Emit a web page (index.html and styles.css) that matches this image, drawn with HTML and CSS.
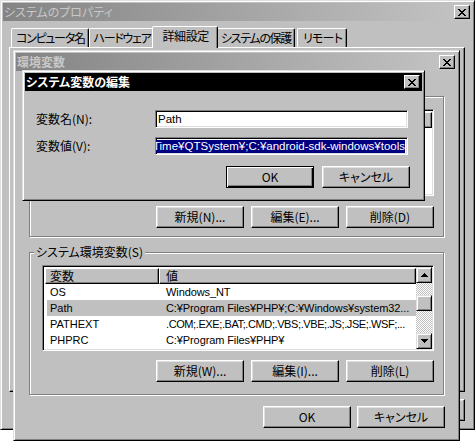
FILE: index.html
```html
<!DOCTYPE html>
<html lang="ja">
<head>
<meta charset="utf-8">
<title>システム変数の編集</title>
<link rel="stylesheet" href="styles.css">
</head>
<body>
<div class="desk">

  <section class="win sys">
    <header class="title inactive">
      <span class="title-text">システムのプロパティ</span>
      <span class="close"><svg width="8" height="7" viewBox="0 0 8 7" shape-rendering="crispEdges"><path d="M0 0h2v1H0zM6 0h2v1H6zM1 1h2v1H1zM5 1h2v1H5zM2 2h4v1H2zM3 3h2v1H3zM2 4h4v1H2zM1 5h2v1H1zM5 5h2v1H5zM0 6h2v1H0zM6 6h2v1H6z" fill="#000"/></svg></span>
    </header>
    <nav class="tabs">
      <span class="tab">コンピュータ名</span>
      <span class="tab">ハードウェア</span>
      <span class="tab sel">詳細設定</span>
      <span class="tab">システムの保護</span>
      <span class="tab last">リモート</span>
    </nav>
    <div class="tabpanel"></div>
    <div class="btnrow sys-btns">
      <span class="btn"></span>
      <span class="btn"></span>
      <span class="btn"></span>
    </div>
  </section>

  <section class="win env">
    <header class="title inactive">
      <span class="title-text bold">環境変数</span>
      <span class="close"><svg width="8" height="7" viewBox="0 0 8 7" shape-rendering="crispEdges"><path d="M0 0h2v1H0zM6 0h2v1H6zM1 1h2v1H1zM5 1h2v1H5zM2 2h4v1H2zM3 3h2v1H3zM2 4h4v1H2zM1 5h2v1H1zM5 5h2v1H5zM0 6h2v1H0zM6 6h2v1H6z" fill="#000"/></svg></span>
    </header>
    <div class="env-body">
      <div class="group user">
        <div class="list user-list">
          <div class="list-main">
            <div class="lv-header"><span class="hc c1"></span><span class="hc c2"></span></div>
          </div>
        </div>
        <div class="btnrow">
          <span class="btn">新規(N)...</span>
          <span class="btn">編集(E)...</span>
          <span class="btn">削除(D)</span>
        </div>
      </div>

      <div class="group system">
        <span class="legend">システム環境変数(S)</span>
        <div class="list sys-list">
          <div class="list-main">
            <div class="lv-header"><span class="hc c1">変数</span><span class="hc c2">値</span></div>
            <div class="row"><span class="c1">OS</span><span class="c2">Windows_NT</span></div>
            <div class="row sel"><span class="c1">Path</span><span class="c2">C:¥Program Files¥PHP¥;C:¥Windows¥system32...</span></div>
            <div class="row"><span class="c1">PATHEXT</span><span class="c2 tight">.COM;.EXE;.BAT;.CMD;.VBS;.VBE;.JS;.JSE;.WSF;...</span></div>
            <div class="row"><span class="c1">PHPRC</span><span class="c2">C:¥Program Files¥PHP¥</span></div>
          </div>
          <div class="vscroll">
            <span class="sb-btn"><svg width="7" height="4" viewBox="0 0 7 4" shape-rendering="crispEdges"><path d="M3 0h1v1H3zM2 1h3v1H2zM1 2h5v1H1zM0 3h7v1H0z" fill="#000"/></svg></span>
            <div class="sb-track"><span class="sb-thumb"></span></div>
            <span class="sb-btn"><svg width="7" height="4" viewBox="0 0 7 4" shape-rendering="crispEdges"><path d="M0 0h7v1H0zM1 1h5v1H1zM2 2h3v1H2zM3 3h1v1H3z" fill="#000"/></svg></span>
          </div>
        </div>
        <div class="btnrow">
          <span class="btn">新規(W)...</span>
          <span class="btn">編集(I)...</span>
          <span class="btn">削除(L)</span>
        </div>
      </div>

      <div class="btnrow env-btns">
        <span class="btn">OK</span>
        <span class="btn">キャンセル</span>
      </div>
    </div>
  </section>

  <section class="win edit">
    <header class="title active">
      <span class="title-text bold">システム変数の編集</span>
      <span class="close"><svg width="8" height="7" viewBox="0 0 8 7" shape-rendering="crispEdges"><path d="M0 0h2v1H0zM6 0h2v1H6zM1 1h2v1H1zM5 1h2v1H5zM2 2h4v1H2zM3 3h2v1H3zM2 4h4v1H2zM1 5h2v1H1zM5 5h2v1H5zM0 6h2v1H0zM6 6h2v1H6z" fill="#000"/></svg></span>
    </header>
    <div class="edit-body">
      <div class="field-row">
        <span class="label">変数名(N):</span>
        <span class="field">Path</span>
      </div>
      <div class="field-row">
        <span class="label">変数値(V):</span>
        <span class="field right"><span class="selected">Time¥QTSystem¥;C:¥android-sdk-windows¥tools</span></span>
      </div>
      <div class="btnrow edit-btns">
        <span class="btn default">OK</span>
        <span class="btn">キャンセル</span>
      </div>
    </div>
  </section>

</div>
</body>
</html>
```

FILE: styles.css
```css
* {
  box-sizing: border-box;
}

html,
body {
  margin: 0;
  padding: 0;
}

body {
  width: 476px;
  height: 442px;
  overflow: hidden;
  background: #fff;
  color: #000;
  font-family: "Noto Sans CJK JP", "Noto Sans", sans-serif;
  font-size: 12px;
  line-height: 16px;
  font-feature-settings: "palt";
}

.desk {
  position: relative;
  width: 476px;
  height: 442px;
}

/* ---------- windows ---------- */
.win {
  position: absolute;
  display: flex;
  flex-direction: column;
  padding: 2px;
  background: #c0c0c0;
  border: 1px solid;
  border-color: #dfdfdf #000 #000 #dfdfdf;
  box-shadow: inset 1px 1px #fff, inset -1px -1px #808080;
}

.sys {
  left: 0;
  top: 0;
  width: 475px;
  height: 430px;
}

.env {
  left: 13px;
  top: 50px;
  width: 447px;
  height: 391px;
}

.edit {
  left: 22px;
  top: 70px;
  width: 403px;
  height: 131px;
}

.title {
  flex: none;
  height: 18px;
  display: flex;
  align-items: center;
  justify-content: space-between;
  padding: 0 2px 0 1px;
}

.title-text {
  white-space: nowrap;
  line-height: 16px;
}

.bold {
  font-weight: bold;
}

.inactive {
  background: linear-gradient(to right, #848484, #c4c4c4);
  color: #c8c8c8;
}

.active {
  background: #000;
  color: #fff;
}

.close {
  width: 16px;
  height: 14px;
  display: flex;
  align-items: center;
  justify-content: center;
  background: #c0c0c0;
  border: 1px solid;
  border-color: #fff #000 #000 #fff;
  box-shadow: inset -1px -1px #808080;
}

/* ---------- tabs ---------- */
.tabs {
  flex: none;
  display: flex;
  align-items: flex-end;
  height: 21px;
  margin: 5px 0 0 8px;
}

.tab {
  height: 19px;
  padding: 0 3px 0 4px;
  line-height: 17px;
  letter-spacing: -1.3px;
  white-space: nowrap;
  border: 1px solid;
  border-bottom: none;
  border-color: #fff #000 transparent #fff;
  border-radius: 2px 2px 0 0;
  box-shadow: inset -1px 0 #808080;
}

.tab.sel {
  position: relative;
  z-index: 1;
  height: 22px;
  margin: 0 -2px -1px;
  padding: 0 8px 0 9px;
  line-height: 18px;
  letter-spacing: -0.4px;
  background: #c0c0c0;
}

.tab.last {
  margin-left: 2px;
  padding: 0 4px 0 5px;
  letter-spacing: -0.8px;
}

.tabpanel {
  flex: none;
  width: 456px;
  height: 345px;
  margin-left: 6px;
  border: 1px solid;
  border-color: #fff #000 #000 #fff;
  box-shadow: inset -1px -1px #808080;
}

/* ---------- buttons ---------- */
.btnrow {
  display: flex;
  justify-content: flex-end;
  gap: 7px;
}

.btn {
  width: 88px;
  height: 22px;
  display: flex;
  align-items: center;
  justify-content: center;
  white-space: nowrap;
  background: #c0c0c0;
  border: 1px solid;
  border-color: #fff #000 #000 #fff;
  box-shadow: inset -1px -1px #808080, inset 1px 1px #dfdfdf;
}

.btn.default {
  border-color: #000;
  box-shadow: inset 1px 1px #fff, inset -1px -1px #000, inset -2px -2px #808080;
}

.sys-btns {
  margin-top: 7px;
  padding-right: 7px;
}

/* ---------- environment window ---------- */
.env-body {
  flex: 1;
  display: flex;
  flex-direction: column;
  padding: 0 13px;
}

.group {
  position: relative;
  border: 1px solid #808080;
  box-shadow: inset 1px 1px #fff, 1px 1px #fff;
  padding-left: 12px;
}

.group .btnrow {
  width: 392px;
}

.user {
  margin-top: 25px;
  height: 141px;
  padding-top: 12px;
}

.system {
  margin-top: 15px;
  height: 143px;
  padding-top: 12px;
}

.legend {
  position: absolute;
  left: 4px;
  top: -9px;
  padding: 0 2px;
  background: #c0c0c0;
  white-space: nowrap;
}

.list {
  width: 392px;
  display: flex;
  padding: 1px;
  background: #fff;
  border: 1px solid;
  border-color: #808080 #fff #fff #808080;
  box-shadow: inset 1px 1px #000, inset -1px -1px #dfdfdf;
  overflow: hidden;
}

.user-list {
  height: 87px;
}

.sys-list {
  height: 86px;
}

.user .btnrow {
  margin-top: 10px;
}

.system .btnrow {
  margin-top: 9px;
}

.list-main {
  flex: 1;
  min-width: 0;
  display: flex;
  flex-direction: column;
  padding-left: 1px;
  padding-top: 1px;
}

.lv-header {
  display: flex;
  height: 16px;
  flex: none;
}

.hc {
  height: 16px;
  line-height: 14px;
  background: #c0c0c0;
  border: 1px solid;
  border-color: #fff #000 #000 #fff;
  box-shadow: inset -1px -1px #808080;
  white-space: nowrap;
}

.c1 {
  flex: none;
  width: 114px;
  padding-left: 4px;
  white-space: nowrap;
}

.c2 {
  flex: 1;
  min-width: 0;
  padding-left: 6px;
  white-space: nowrap;
  overflow: hidden;
}

.row {
  display: flex;
  height: 16px;
  line-height: 16px;
  flex: none;
  font-family: "Liberation Sans", "Noto Sans CJK JP", sans-serif;
  font-size: 11px;
}

.row .c1 {
  padding-left: 5px;
}

.row .c2 {
  padding-left: 7px;
  letter-spacing: -0.1px;
}

.row .c2.tight {
  letter-spacing: -0.4px;
}

.row.sel {
  background: linear-gradient(to right, transparent 2px, #c0c0c0 2px);
}

.vscroll {
  flex: none;
  width: 16px;
  display: flex;
  flex-direction: column;
}

.sb-btn {
  flex: none;
  width: 16px;
  height: 16px;
  display: flex;
  align-items: center;
  justify-content: center;
  background: #c0c0c0;
  border: 1px solid;
  border-color: #dfdfdf #000 #000 #dfdfdf;
  box-shadow: inset 1px 1px #fff, inset -1px -1px #808080;
}

.sb-track {
  flex: 1;
  padding-top: 12px;
  background-color: #fff;
  background-image: repeating-conic-gradient(#c0c0c0 0 25%, #fff 0 50%);
  background-size: 2px 2px;
}

.sb-thumb {
  display: block;
  width: 16px;
  height: 16px;
  background: #c0c0c0;
  border: 1px solid;
  border-color: #dfdfdf #000 #000 #dfdfdf;
  box-shadow: inset 1px 1px #fff, inset -1px -1px #808080;
}

.env-btns {
  margin-top: 11px;
  margin-right: -1px;
  gap: 6px;
}

/* ---------- edit dialog ---------- */
.edit-body {
  flex: 1;
  display: flex;
  flex-direction: column;
  gap: 9px;
  padding: 19px 12px 0 11px;
}

.field-row {
  display: flex;
  align-items: center;
  height: 18px;
}

.label {
  width: 119px;
  flex: none;
  white-space: nowrap;
}

.field {
  width: 253px;
  height: 18px;
  display: flex;
  align-items: center;
  padding: 0 2px 0 2px;
  background: #fff;
  border: 1px solid;
  border-color: #808080 #fff #fff #808080;
  box-shadow: inset 1px 1px #000, inset -1px -1px #dfdfdf;
  white-space: nowrap;
  overflow: hidden;
  font-family: "Liberation Sans", "Noto Sans CJK JP", sans-serif;
  font-size: 11.5px;
}

.field.right {
  justify-content: flex-end;
}

.selected {
  flex: none;
  background: #000080;
  color: #fff;
  line-height: 13px;
}

.edit-btns {
  margin-top: 2px;
  gap: 8px;
}
```
